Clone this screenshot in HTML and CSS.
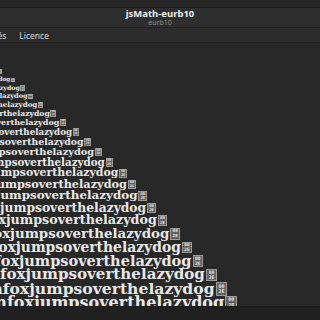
FILE: index.html
```html
<!DOCTYPE html>
<html lang="fr">
<head>
    <meta charset="UTF-8">
    <meta name="viewport" content="width=device-width, initial-scale=1.0">
    <title>jsMath-eurb10</title>
    <link rel="stylesheet" href="styles.css">
</head>
<body>
    <div class="top-strip"></div>

    <header class="header-bar">
        <div class="font-title">jsMath-eurb10</div>
        <div class="font-subtitle">eurb10</div>
    </header>

    <nav class="tab-bar">
        <span class="tab">Propriétés</span>
        <span class="tab">Licence</span>
    </nav>

    <!-- aperçu en cascade -->
    <main class="waterfall">
        <div class="line" style="width:2px;font-size:5.2px;height:9px"><span class="sample">thequickbrownfoxjumpsoverthelazydog</span><span class="glyph-box"><i>00</i><i>2E</i></span></div>
        <div class="line" style="width:15px;font-size:5.8px;height:8px"><span class="sample">thequickbrownfoxjumpsoverthelazydog</span><span class="glyph-box"><i>00</i><i>2E</i></span></div>
        <div class="line" style="width:25px;font-size:6.3px;height:8px"><span class="sample">thequickbrownfoxjumpsoverthelazydog</span><span class="glyph-box"><i>00</i><i>2E</i></span></div>
        <div class="line" style="width:33px;font-size:6.6px;height:9px"><span class="sample">thequickbrownfoxjumpsoverthelazydog</span><span class="glyph-box"><i>00</i><i>2E</i></span></div>
        <div class="line" style="width:43px;font-size:7.1px;height:8px"><span class="sample">thequickbrownfoxjumpsoverthelazydog</span><span class="glyph-box"><i>00</i><i>2E</i></span></div>
        <div class="line" style="width:56px;font-size:7.7px;height:9px"><span class="sample">thequickbrownfoxjumpsoverthelazydog</span><span class="glyph-box"><i>00</i><i>2E</i></span></div>
        <div class="line" style="width:66px;font-size:8.1px;height:9px"><span class="sample">thequickbrownfoxjumpsoverthelazydog</span><span class="glyph-box"><i>00</i><i>2E</i></span></div>
        <div class="line" style="width:79px;font-size:8.7px;height:10px"><span class="sample">thequickbrownfoxjumpsoverthelazydog</span><span class="glyph-box"><i>00</i><i>2E</i></span></div>
        <div class="line" style="width:91px;font-size:9.3px;height:10px"><span class="sample">thequickbrownfoxjumpsoverthelazydog</span><span class="glyph-box"><i>00</i><i>2E</i></span></div>
        <div class="line" style="width:102px;font-size:9.8px;height:10px"><span class="sample">thequickbrownfoxjumpsoverthelazydog</span><span class="glyph-box"><i>00</i><i>2E</i></span></div>
        <div class="line" style="width:113px;font-size:10.3px;height:11px"><span class="sample">thequickbrownfoxjumpsoverthelazydog</span><span class="glyph-box"><i>00</i><i>2E</i></span></div>
        <div class="line" style="width:127px;font-size:10.9px;height:11px"><span class="sample">thequickbrownfoxjumpsoverthelazydog</span><span class="glyph-box"><i>00</i><i>2E</i></span></div>
        <div class="line" style="width:136px;font-size:11.3px;height:11px"><span class="sample">thequickbrownfoxjumpsoverthelazydog</span><span class="glyph-box"><i>00</i><i>2E</i></span></div>
        <div class="line" style="width:147px;font-size:11.9px;height:12px"><span class="sample">thequickbrownfoxjumpsoverthelazydog</span><span class="glyph-box"><i>00</i><i>2E</i></span></div>
        <div class="line" style="width:156px;font-size:12.3px;height:12px"><span class="sample">thequickbrownfoxjumpsoverthelazydog</span><span class="glyph-box"><i>00</i><i>2E</i></span></div>
        <div class="line" style="width:167px;font-size:12.7px;height:13px"><span class="sample">thequickbrownfoxjumpsoverthelazydog</span><span class="glyph-box"><i>00</i><i>2E</i></span></div>
        <div class="line" style="width:180px;font-size:13.4px;height:14px"><span class="sample">thequickbrownfoxjumpsoverthelazydog</span><span class="glyph-box"><i>00</i><i>2E</i></span></div>
        <div class="line" style="width:192px;font-size:13.9px;height:13px"><span class="sample">thequickbrownfoxjumpsoverthelazydog</span><span class="glyph-box"><i>00</i><i>2E</i></span></div>
        <div class="line" style="width:203px;font-size:14.5px;height:14px"><span class="sample">thequickbrownfoxjumpsoverthelazydog</span><span class="glyph-box"><i>00</i><i>2E</i></span></div>
        <div class="line" style="width:217px;font-size:15.1px;height:14px"><span class="sample">thequickbrownfoxjumpsoverthelazydog</span><span class="glyph-box"><i>00</i><i>2E</i></span></div>
        <div class="line" style="width:227px;font-size:15.6px;height:14px"><span class="sample">thequickbrownfoxjumpsoverthelazydog</span><span class="glyph-box"><i>00</i><i>2E</i></span></div>
        <div class="line" style="width:237px;font-size:16px;height:14px"><span class="sample">thequickbrownfoxjumpsoverthelazydog</span><span class="glyph-box"><i>00</i><i>2E</i></span></div>
    </main>

    <footer class="bottom-bar"></footer>
</body>
</html>
```

FILE: styles.css
```css
* {
    margin: 0;
    padding: 0;
    box-sizing: border-box;
}

body {
    font-family: "Noto Sans", "Open Sans", sans-serif;
    background: #282828;
    color: #eeeeec;
    width: 320px;
    height: 320px;
    overflow: hidden;
    display: flex;
    flex-direction: column;
}

.top-strip {
    height: 8px;
    background: #262626;
    border-bottom: 1px solid #1c1c1c;
}

.header-bar {
    height: 19px;
    background: #2e2e2e;
    display: flex;
    flex-direction: column;
    align-items: center;
    justify-content: center;
}

.font-title {
    font-size: 9.5px;
    font-weight: 700;
    line-height: 10px;
    color: #ececec;
}

.font-subtitle {
    font-size: 7px;
    line-height: 8px;
    color: #8c8c8c;
}

.tab-bar {
    height: 16px;
    background: #2c2c2c;
    border-top: 1px solid #232323;
    border-bottom: 1px solid #1f1f1f;
    display: flex;
    align-items: center;
    gap: 13px;
    margin-left: -35px;
    font-size: 8.5px;
    color: #d8d8d8;
    overflow: hidden;
}

.tab {
    white-space: nowrap;
}

/* aperçu en cascade */
.waterfall {
    flex: 1;
    overflow: hidden;
    padding-top: 24px;
    background: #282828;
    font-family: "DejaVu Serif", serif;
    font-weight: 700;
    color: #e8e8e8;
}

.line {
    display: flex;
    justify-content: flex-end;
    align-items: center;
    white-space: nowrap;
    line-height: 1;
}

.glyph-box {
    display: inline-flex;
    flex-direction: column;
    align-items: center;
    justify-content: center;
    flex-shrink: 0;
    width: 0.72em;
    height: 0.85em;
    margin-left: 0.08em;
    background: #626262;
    border: 1px solid #9a9a9a;
}

.glyph-box i {
    font-style: normal;
    font-family: "DejaVu Sans Mono", monospace;
    font-size: 0.32em;
    line-height: 1.1;
    color: #e6e6e6;
}

.bottom-bar {
    height: 14px;
    background: #202020;
    border-top: 1px solid #1a1a1a;
}
```
